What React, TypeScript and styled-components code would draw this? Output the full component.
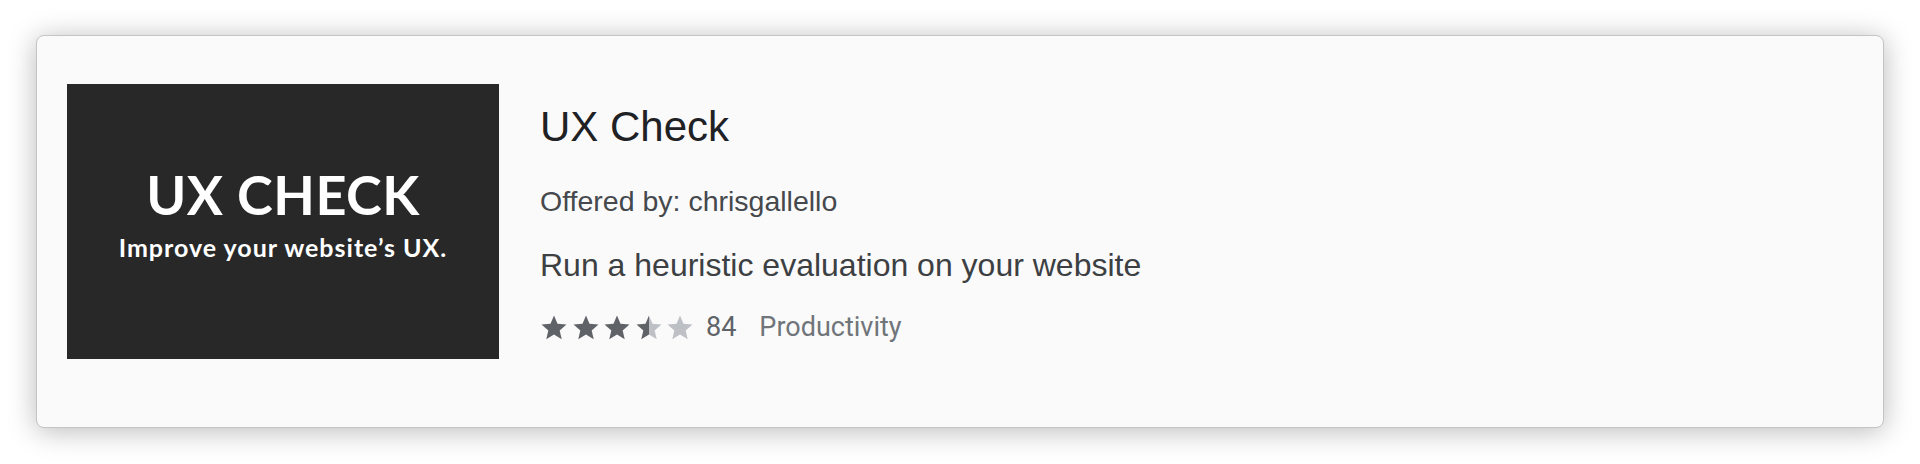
import React from "react";
import styled, { createGlobalStyle } from "styled-components";

const GlobalStyle = createGlobalStyle`
  html, body {
    margin: 0;
    padding: 0;
    background: #ffffff;
  }
  body {
    font-family: "Liberation Sans", Arial, sans-serif;
  }
`;

const STAR_PATH =
  "M12 17.27L18.18 21l-1.64-7.03L22 9.24l-7.19-.61L12 2 9.19 8.63 2 9.24l5.46 4.73L5.82 21z";

type StarKind = "full" | "half" | "empty";

const Star = ({ kind }: { kind: StarKind }) => {
  const fill =
    kind === "full" ? "#5f6368" : kind === "empty" ? "#bdc1c6" : "url(#half-star)";
  return (
    <StarIcon viewBox="0 0 24 24">
      {kind === "half" && (
        <defs>
          <linearGradient id="half-star" x1="0" x2="1" y1="0" y2="0">
            <stop offset="50%" stopColor="#5f6368" />
            <stop offset="50%" stopColor="#bdc1c6" />
          </linearGradient>
        </defs>
      )}
      <path d={STAR_PATH} fill={fill} />
    </StarIcon>
  );
};

const App = () => {
  const stars: StarKind[] = ["full", "full", "full", "half", "empty"];
  return (
    <Page>
      <GlobalStyle />
      <Card>
        <Banner>
          <BannerTitle>UX CHECK</BannerTitle>
          <BannerTagline>Improve your website’s UX.</BannerTagline>
        </Banner>
        <Details>
          <Title>UX Check</Title>
          <Offered>Offered by: chrisgallello</Offered>
          <Description>Run a heuristic evaluation on your website</Description>
          <Meta>
            <Stars>
              {stars.map((s, i) => (
                <Star key={i} kind={s} />
              ))}
            </Stars>
            <Count>84</Count>
            <Category>Productivity</Category>
          </Meta>
        </Details>
      </Card>
    </Page>
  );
};

const Page = styled.div`
  padding: 35px 36px 36px;
`;

const Card = styled.div`
  display: flex;
  align-items: flex-start;
  gap: 41px;
  height: 391px;
  background: #fafafa;
  border: 1px solid #c4c4c4;
  border-radius: 8px;
  box-shadow: 0 3px 28px rgba(0, 0, 0, 0.28);
  overflow: hidden;
`;

const Banner = styled.div`
  flex: 0 0 auto;
  width: 432px;
  height: 275px;
  margin: 48px 0 0 30px;
  background: #282828;
  display: flex;
  flex-direction: column;
  align-items: center;
  justify-content: center;
  padding-bottom: 15px;
  box-sizing: border-box;
  color: #ffffff;
  font-family: Lato, "Open Sans", sans-serif;
  font-weight: 700;
`;

const BannerTitle = styled.div`
  font-size: 54px;
  line-height: 1;
  letter-spacing: 0.5px;
`;

const BannerTagline = styled.div`
  font-size: 25px;
  line-height: 1;
  letter-spacing: 1px;
  margin-top: 13px;
`;

const Details = styled.div`
  display: flex;
  flex-direction: column;
  padding-top: 70px;
  font-family: "Liberation Sans", Arial, sans-serif;
`;

const Title = styled.div`
  font-size: 42px;
  line-height: 1;
  color: #202124;
`;

const Offered = styled.div`
  font-size: 28.5px;
  line-height: 1;
  color: #45484c;
  margin-top: 39px;
`;

const Description = styled.div`
  font-size: 32px;
  line-height: 1;
  color: #3c4043;
  margin-top: 33px;
`;

const Meta = styled.div`
  display: flex;
  align-items: center;
  height: 30px;
  margin-top: 32px;
  margin-left: -1px;
  font-family: Roboto, "Liberation Sans", sans-serif;
  font-size: 27px;
  line-height: 1;
`;

const Stars = styled.div`
  display: flex;
  gap: 1.5px;
`;

const StarIcon = styled.svg`
  width: 30px;
  height: 30px;
  display: block;
`;

const Count = styled.span`
  color: #5f6368;
  margin-left: 11px;
`;

const Category = styled.span`
  color: #70757a;
  margin-left: 23px;
`;

export default App;
